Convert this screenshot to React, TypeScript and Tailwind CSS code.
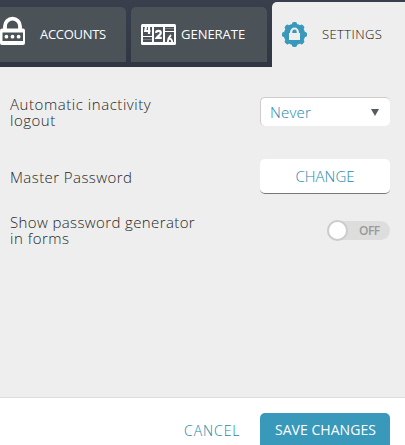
import React from "react";

function PadlockIcon() {
  return (
    <svg width="26" height="30" viewBox="0 0 26 30" className="block shrink-0">
      <path d="M5 14V10a7.500 7.300 0 0 1 15 0V14" fill="none" stroke="#fff" strokeWidth="3.800" />
      <rect x="0" y="12.500" width="25" height="16.500" rx="2" fill="#fff" />
      <rect x="2.500" y="16.500" width="20.500" height="8.500" fill="#4b5258" />
      <circle cx="6.400" cy="20.700" r="1.900" fill="#fff" />
      <circle cx="12.500" cy="20.700" r="1.900" fill="#fff" />
      <circle cx="18.600" cy="20.700" r="1.900" fill="#fff" />
    </svg>
  );
}

function DialIcon() {
  return (
    <svg width="35" height="21" viewBox="0 0 35 21" className="block shrink-0">
      <rect width="35" height="21" rx="1.500" fill="#fff" />
      <path d="M2 3h9v15H2zM13 3h9v15h-9zM24 3h9v15h-9z" fill="#4b5258" />
      <path d="M2 12.500h9M24 7.500h9" stroke="#fff" strokeWidth="1.200" />
      <path d="M2 15.500h9M24 4.500h9" stroke="#a5a9ac" strokeWidth="0.500" />
      <path d="M5 3 4.200 7h5.300M8 3v7" fill="none" stroke="#fff" strokeWidth="2.200" />
      <path d="M15 8.800c.2-2.600 4.800-2.600 4.800.2 0 1.800-2.800 3-4.100 4.800H20.800" fill="none" stroke="#fff" strokeWidth="2.200" />
      <path d="M30 11c-1.400 1.400-3 3.400-3.200 7M27.500 15.200c2-1 3.600.2 3.600 2.800" fill="none" stroke="#fff" strokeWidth="1.900" />
    </svg>
  );
}

function GearLockIcon() {
  return (
    <svg width="25" height="25" viewBox="0 0 25 25" className="block shrink-0">
      <g fill="#3899ba">
        <circle cx="12.500" cy="12.500" r="10.700" />
        <rect x="10" y="0" width="5" height="25" rx="1.800" />
        <rect x="10" y="0" width="5" height="25" rx="1.800" transform="rotate(45 12.500 12.500)" />
        <rect x="10" y="0" width="5" height="25" rx="1.800" transform="rotate(90 12.500 12.500)" />
        <rect x="10" y="0" width="5" height="25" rx="1.800" transform="rotate(135 12.500 12.500)" />
      </g>
      <path d="M7 11h1V10.500a4.500 5 0 0 1 9 0v.5H18V18H7z" fill="#eee" />
      <path d="M10.300 11v-1.200a2.200 2.300 0 0 1 4.400 0v1.200z" fill="#3899ba" />
    </svg>
  );
}

export default function App() {
  return (
    <div className="flex h-[445px] w-[405px] flex-col overflow-hidden bg-[#eeeeee] font-['Open_Sans','Noto_Sans',sans-serif] text-[15px] font-light leading-4 text-[#262626]">
      <header className="flex h-[67px] shrink-0 bg-linear-to-b from-[#393f4c] to-[#303743] text-[13px] font-normal whitespace-nowrap text-white">
        <div className="mt-[7px] flex h-[55px] w-[126px] shrink-0 rounded-tr-[5px] bg-[#4b5258]">
          <div className="mt-[9px] w-10 shrink-0"><PadlockIcon /></div>
          <span className="mt-[19px] tracking-[-0.3px]">ACCOUNTS</span>
        </div>
        <div className="mt-[7px] ml-[5px] flex h-[55px] w-[136px] shrink-0 rounded-t-[5px] bg-[#4b5258] pl-[10px]">
          <div className="mt-[17px] w-10 shrink-0"><DialIcon /></div>
          <span className="mt-[19px] tracking-[-0.02px]">GENERATE</span>
        </div>
        <div className="mt-[2px] ml-[5px] flex h-[65px] w-[133px] shrink-0 rounded-tl-[5px] bg-[#eeeeee] pl-[10px] text-[#111]">
          <div className="mt-5 w-10 shrink-0"><GearLockIcon /></div>
          <span className="mt-6 font-light tracking-[0.4px]">SETTINGS</span>
        </div>
      </header>

      <main className="flex h-[330px] shrink-0 flex-col pr-[15px] pl-[10px]">
        <div className="mt-[30px] flex h-[29px] items-start justify-between whitespace-nowrap">
          <div className="-mt-px flex flex-col"><span className="tracking-[0.55px]">Automatic inactivity</span><span className="tracking-[0.5px]">logout</span></div>
          <button className="flex h-[29px] w-[130px] items-center justify-between rounded-[5px] border-t border-l border-[#ccc] bg-white pr-[11px] pl-[9px] text-[#2489ad]">
            <span className="tracking-[0.2px]">Never</span>
            <svg width="8" height="7" className="block"><path d="M0 0h8L4 7z" fill="#555b60" /></svg>
          </button>
        </div>
        <div className="mt-[33px] flex h-[35px] items-center justify-between whitespace-nowrap">
          <span className="tracking-[0.42px]">Master Password</span>
          <button className="h-[35px] w-[130px] rounded-[5px] border-b border-[#777] bg-white pb-px text-[#2489ad]">CHANGE</button>
        </div>
        <div className="mt-5 flex h-8 items-start justify-between whitespace-nowrap">
          <div className="flex flex-col"><span className="tracking-[0.38px]">Show password generator</span><span className="tracking-[0.5px]">in forms</span></div>
          <button className="mt-[7px] flex h-[19px] w-[63px] items-center rounded-full bg-[#dddddd] text-[12px] font-semibold text-[#999]">
            <span className="h-[21px] w-[21px] shrink-0 rounded-full border-2 border-[#ccc] bg-white" />
            <span className="ml-[11px] tracking-[-0.5px]">OFF</span>
          </button>
        </div>
      </main>

      <footer className="flex h-12 shrink-0 border-t border-[#dcdcdc] bg-white whitespace-nowrap">
        <button className="ml-[184px] mt-[25px] h-4 w-[76px] text-left text-[14px] tracking-[0.95px] text-[#1a85a9]">CANCEL</button>
        <button className="mt-[15px] flex h-[40px] w-[130px] rounded-t-[5px] bg-[#3899ba] pt-[9px] pl-[15px] text-[14px] font-normal tracking-[0.04px] text-white">SAVE CHANGES</button>
      </footer>
    </div>
  );
}
